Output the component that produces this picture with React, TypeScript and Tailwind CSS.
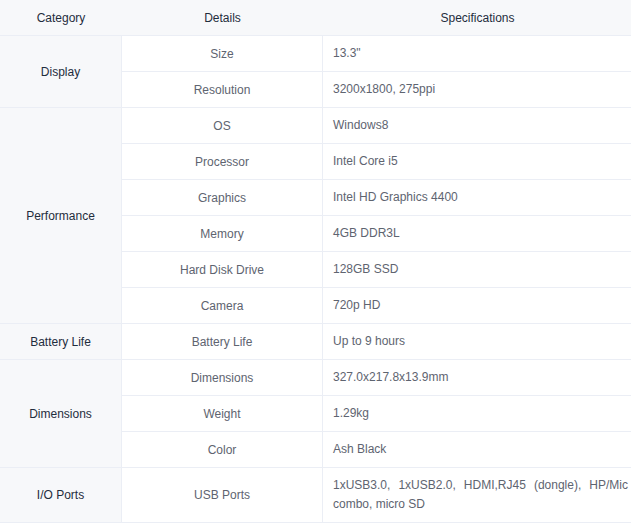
import React from 'react';

interface Spec {
    detail: string
    value: string
}

interface Group {
    category: string
    specs: Spec[]
}

const groups: Group[] = [
    {
        category: 'Display',
        specs: [
            { detail: 'Size', value: '13.3"' },
            { detail: 'Resolution', value: '3200x1800, 275ppi' },
        ],
    },
    {
        category: 'Performance',
        specs: [
            { detail: 'OS', value: 'Windows8' },
            { detail: 'Processor', value: 'Intel Core i5' },
            { detail: 'Graphics', value: 'Intel HD Graphics 4400' },
            { detail: 'Memory', value: '4GB DDR3L' },
            { detail: 'Hard Disk Drive', value: '128GB SSD' },
            { detail: 'Camera', value: '720p HD' },
        ],
    },
    {
        category: 'Battery Life',
        specs: [{ detail: 'Battery Life', value: 'Up to 9 hours' }],
    },
    {
        category: 'Dimensions',
        specs: [
            { detail: 'Dimensions', value: '327.0x217.8x13.9mm' },
            { detail: 'Weight', value: '1.29kg' },
            { detail: 'Color', value: 'Ash Black' },
        ],
    },
    {
        category: 'I/O Ports',
        specs: [{ detail: 'USB Ports', value: '1xUSB3.0, 1xUSB2.0, HDMI,RJ45 (dongle), HP/Mic combo, micro SD' }],
    },
];

const App: React.FC = () => {
    return (
        <div className="w-[631px] overflow-hidden bg-white font-['Liberation_Sans',Arial,sans-serif] text-[12px]">
            <table className="w-[632px] table-fixed border-separate border-spacing-0">
                <thead>
                    <tr className="bg-[#f7f8fa]">
                        <th className="w-[122px] h-[36px] border-b border-[#ebeef5] font-normal text-[#1f2d3d] text-center">Category</th>
                        <th className="w-[201px] h-[36px] border-b border-[#ebeef5] font-normal text-[#1f2d3d] text-center">Details</th>
                        <th className="w-[309px] h-[36px] border-b border-[#ebeef5] font-normal text-[#1f2d3d] text-center">Specifications</th>
                    </tr>
                </thead>
                <tbody>
                    {groups.map((group) =>
                        group.specs.map((spec, i) => (
                            <tr key={group.category + spec.detail}>
                                {i === 0 && (
                                    <td
                                        rowSpan={group.specs.length}
                                        className="bg-[#f7f8fa] border-r border-b border-[#ebeef5] text-center align-middle text-[#1f2d3d]"
                                    >
                                        {group.category}
                                    </td>
                                )}
                                <td className="h-[36px] border-r border-b border-[#ebeef5] text-center align-middle text-[#5e6470] py-[8px] leading-[18px]">
                                    {spec.detail}
                                </td>
                                <td className="h-[36px] border-b border-[#ebeef5] align-middle text-[#5e6470] pl-[10px] pr-[4px] py-[8px] leading-[19px] text-justify">
                                    {spec.value}
                                </td>
                            </tr>
                        ))
                    )}
                </tbody>
            </table>
        </div>
    )
}

export default App
